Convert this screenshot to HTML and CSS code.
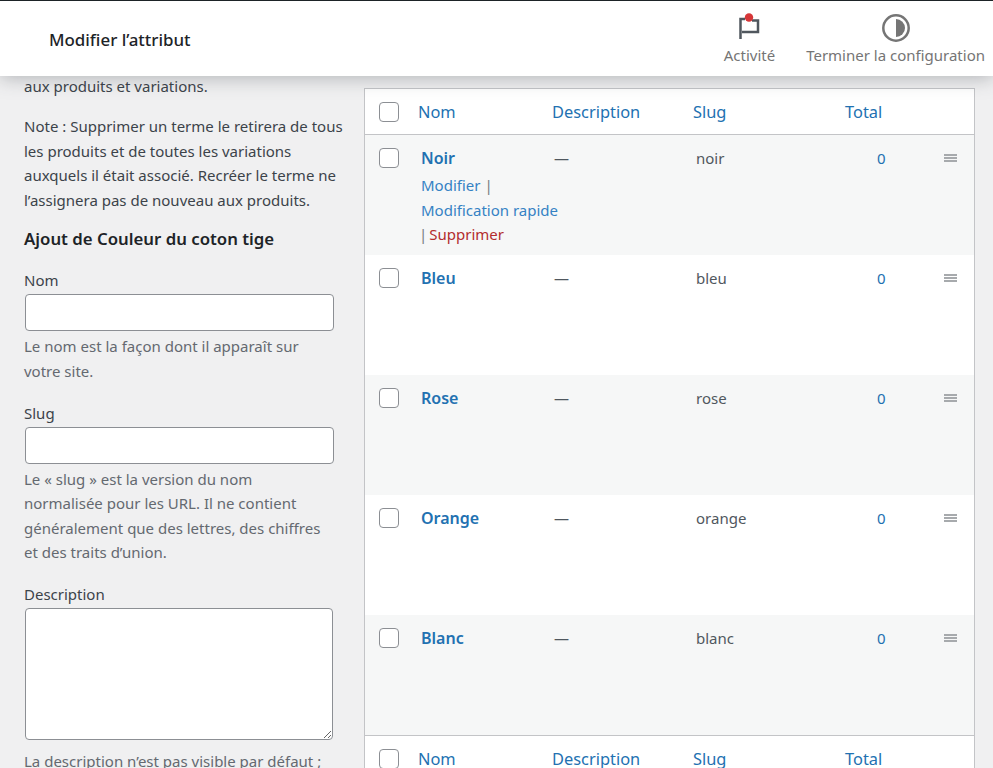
FILE: index.html
```html
<!DOCTYPE html>
<html lang="fr">
<head>
  <meta charset="UTF-8">
  <title>Modifier l’attribut</title>
  <link rel="stylesheet" href="styles.css">
</head>
<body>

  <header class="topbar">
    <h1>Modifier l’attribut</h1>
    <div class="topbar-actions">
      <a class="action action-activity" href="#">
        <svg width="24" height="30" viewBox="0 0 24 30">
          <path d="M3.500 26V6H8M15 7.500h6V19H5" fill="none" stroke="#50575e" stroke-width="2.500"/>
          <circle cx="12" cy="4.500" r="4.200" fill="#d63638"/>
        </svg>
        <span>Activité</span>
      </a>
      <a class="action action-setup" href="#">
        <svg width="30" height="30" viewBox="0 0 30 30">
          <circle cx="15" cy="15" r="12.700" fill="none" stroke="#757575" stroke-width="2.500"/>
          <path d="M15 6a9 9 0 0 1 0 18z" fill="#757575"/>
        </svg>
        <span>Terminer la configuration</span>
      </a>
    </div>
  </header>

  <main class="columns">
    <section class="col-left">
      <p class="intro">aux produits et variations.</p>
      <p>Note : Supprimer un terme le retirera de tous les produits et de toutes les variations auxquels il était associé. Recréer le terme ne l’assignera pas de nouveau aux produits.</p>

      <h2>Ajout de Couleur du coton tige</h2>

      <div class="field">
        <label>Nom</label>
        <input type="text">
        <p class="help">Le nom est la façon dont il apparaît sur votre site.</p>
      </div>

      <div class="field">
        <label>Slug</label>
        <input type="text">
        <p class="help">Le « slug » est la version du nom normalisée pour les URL. Il ne contient généralement que des lettres, des chiffres et des traits d’union.</p>
      </div>

      <div class="field">
        <label>Description</label>
        <textarea></textarea>
        <p class="help">La description n’est pas visible par défaut ; cependant, certains thèmes peuvent l’afficher.</p>
      </div>
    </section>

    <section class="col-right">
      <table class="terms">
        <thead>
          <tr>
            <th class="col-check"><span class="checkbox"></span></th>
            <th class="col-name"><a href="#">Nom</a></th>
            <th class="col-desc"><a href="#">Description</a></th>
            <th class="col-slug"><a href="#">Slug</a></th>
            <th class="col-total"><a href="#">Total</a></th>
            <th class="col-handle"></th>
          </tr>
        </thead>
        <tbody>
          <tr class="alt">
            <td class="col-check"><span class="checkbox"></span></td>
            <td class="col-name">
              <a class="term" href="#">Noir</a>
              <div class="row-actions">
                <a href="#">Modifier</a> <span class="sep">|</span><br>
                <a href="#">Modification rapide</a><br>
                <span class="sep sep-start">|</span><a class="delete" href="#">Supprimer</a>
              </div>
            </td>
            <td class="col-desc">—</td>
            <td class="col-slug">noir</td>
            <td class="col-total"><a href="#">0</a></td>
            <td class="col-handle"><span class="handle"></span></td>
          </tr>
          <tr>
            <td class="col-check"><span class="checkbox"></span></td>
            <td class="col-name"><a class="term" href="#">Bleu</a></td>
            <td class="col-desc">—</td>
            <td class="col-slug">bleu</td>
            <td class="col-total"><a href="#">0</a></td>
            <td class="col-handle"><span class="handle"></span></td>
          </tr>
          <tr class="alt">
            <td class="col-check"><span class="checkbox"></span></td>
            <td class="col-name"><a class="term" href="#">Rose</a></td>
            <td class="col-desc">—</td>
            <td class="col-slug">rose</td>
            <td class="col-total"><a href="#">0</a></td>
            <td class="col-handle"><span class="handle"></span></td>
          </tr>
          <tr>
            <td class="col-check"><span class="checkbox"></span></td>
            <td class="col-name"><a class="term" href="#">Orange</a></td>
            <td class="col-desc">—</td>
            <td class="col-slug">orange</td>
            <td class="col-total"><a href="#">0</a></td>
            <td class="col-handle"><span class="handle"></span></td>
          </tr>
          <tr class="alt">
            <td class="col-check"><span class="checkbox"></span></td>
            <td class="col-name"><a class="term" href="#">Blanc</a></td>
            <td class="col-desc">—</td>
            <td class="col-slug">blanc</td>
            <td class="col-total"><a href="#">0</a></td>
            <td class="col-handle"><span class="handle"></span></td>
          </tr>
        </tbody>
        <tfoot>
          <tr>
            <th class="col-check"><span class="checkbox"></span></th>
            <th class="col-name"><a href="#">Nom</a></th>
            <th class="col-desc"><a href="#">Description</a></th>
            <th class="col-slug"><a href="#">Slug</a></th>
            <th class="col-total"><a href="#">Total</a></th>
            <th class="col-handle"></th>
          </tr>
        </tfoot>
      </table>
    </section>
  </main>

</body>
</html>
```

FILE: styles.css
```css
html, body {
  height: 100%;
}
body {
  margin: 0;
  height: 768px;
  overflow: hidden;
  background: #f0f0f1;
  color: #3c434a;
  font-family: "Noto Sans", Arial, sans-serif;
  font-size: 15px;
  line-height: 24.375px;
}
a {
  color: #2271b1;
  text-decoration: none;
}

/* top bar */
.topbar {
  position: relative;
  z-index: 2;
  box-sizing: border-box;
  height: 76px;
  display: flex;
  align-items: center;
  justify-content: space-between;
  padding: 3px 8px 0 49px;
  background: #fff;
  border-top: 1px solid #1d2327;
  box-shadow: 0 2px 18px rgba(60, 67, 74, 0.35);
}
.topbar h1 {
  margin: 0;
  font-size: 16.900px;
  font-weight: 500;
  color: #1d2327;
}
.topbar-actions {
  display: flex;
  gap: 31px;
}
.action {
  display: flex;
  flex-direction: column;
  align-items: center;
  color: #757575;
}
.action svg {
  display: block;
}

/* columns */
.columns {
  display: flex;
  align-items: flex-start;
  padding: 0 18px 0 24px;
  gap: 16px;
}
.col-left {
  width: 324px;
  flex: none;
}
.col-right {
  flex: 1;
  padding-top: 12px;
}
.col-left p {
  margin: 0 0 16px;
}
.col-left .intro {
  margin-top: -2px;
}
.col-left h2 {
  margin: -1px 0 17px;
  font-size: 16.800px;
  font-weight: 600;
  line-height: 24px;
  color: #1d2327;
}
.field {
  margin-bottom: 17.500px;
}
.field label {
  display: block;
}
.field input,
.field textarea {
  display: block;
  box-sizing: border-box;
  width: 309px;
  margin: 2px 0 3px 1px;
  padding: 0 8px;
  background: #fff;
  border: 1px solid #8c8f94;
  border-radius: 4px;
}
.field input {
  height: 37px;
}
.field textarea {
  width: 308px;
  height: 132px;
  margin-bottom: 9px;
}
.col-left .help {
  width: 310px;
  margin: 0;
  color: #646970;
}

/* terms table */
.terms {
  width: 100%;
  table-layout: fixed;
  border-collapse: separate;
  border-spacing: 0;
  background: #fff;
  border: 1px solid #c3c4c7;
  color: #50575e;
}
.terms th {
  height: 45px;
  padding: 0;
  font-size: 16.400px;
  font-weight: 400;
  text-align: left;
}
.terms th a {
  display: block;
  padding-top: 2px;
}
.terms thead th {
  border-bottom: 1px solid #c3c4c7;
}
.terms tfoot th {
  border-top: 1px solid #c3c4c7;
}
.terms td {
  height: 120px;
  padding: 11px 0 0;
  box-sizing: border-box;
  vertical-align: top;
}
.terms tr.alt td {
  background: #f6f7f7;
}
.col-check {
  width: 53px;
  padding-left: 14px !important;
  box-sizing: border-box;
}
.col-name {
  width: 134px;
}
.terms td.col-name {
  padding-left: 3px;
}
.col-desc {
  width: 141px;
}
.terms td.col-desc {
  padding-left: 2px;
}
.col-slug {
  width: 152px;
}
.terms td.col-slug {
  padding-left: 3px;
}
.col-total {
  width: 70px;
}
.terms td.col-total {
  padding-left: 32px;
}
.terms td.col-handle {
  padding-left: 29px;
}
.checkbox {
  display: block;
  box-sizing: border-box;
  width: 20px;
  height: 20px;
  background: #fff;
  border: 1px solid #8c8f94;
  border-radius: 4px;
}
.terms td .checkbox {
  margin-top: 2px;
}
.term {
  font-size: 16px;
  font-weight: 600;
}
.row-actions {
  margin-top: 3px;
  color: #787c82;
  white-space: nowrap;
}
.row-actions a {
  color: #3582c4;
}
.row-actions .delete {
  color: #b32d2e;
}
.sep-start {
  margin: 0 2px 0 -2px;
}
.handle {
  display: block;
  width: 13px;
  height: 8px;
  margin-top: 8px;
  background: repeating-linear-gradient(#a7aaad 0 2px, transparent 2px 3px);
}
```
